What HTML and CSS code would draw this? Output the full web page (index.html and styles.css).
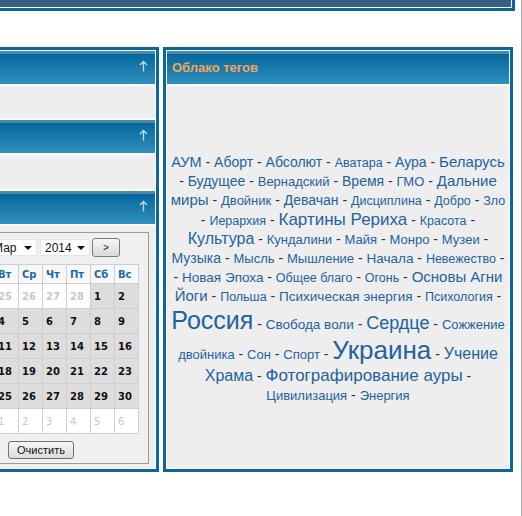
FILE: index.html
```html
<!DOCTYPE html>
<html lang="ru">
<head>
<meta charset="utf-8">
<title>Облако тегов</title>
<link rel="stylesheet" href="styles.css">
</head>
<body>
<div class="page">
  <div class="topbox"><div class="topbar"></div></div>
  <div class="columns">
    <div class="panel left">
      <div class="phead"><svg class="arrow" width="9" height="12" viewBox="0 0 9 12"><path d="M4.5 1.5V11.5M1 5L4.5 1.5L8 5" fill="none" stroke="#c4dcea" stroke-width="1.3"/></svg></div>
      <div class="pbody b1"></div>
      <div class="phead"><svg class="arrow" width="9" height="12" viewBox="0 0 9 12"><path d="M4.5 1.5V11.5M1 5L4.5 1.5L8 5" fill="none" stroke="#c4dcea" stroke-width="1.3"/></svg></div>
      <div class="pbody b2"></div>
      <div class="phead"><svg class="arrow" width="9" height="12" viewBox="0 0 9 12"><path d="M4.5 1.5V11.5M1 5L4.5 1.5L8 5" fill="none" stroke="#c4dcea" stroke-width="1.3"/></svg></div>
      <div class="pbody b3">
        <div class="cal">
          <div class="calnav">
            <span class="btn prev">&lt;</span>
            <span class="sel month">Мар<i class="tri"></i></span>
            <span class="sel year">2014<i class="tri"></i></span>
            <span class="btn next">&gt;</span>
          </div>
          <table class="grid">
            <tr class="hd"><th>Пн</th><th>Вт</th><th>Ср</th><th>Чт</th><th>Пт</th><th>Сб</th><th>Вс</th></tr>
            <tr><td class="o">24</td><td class="o">25</td><td class="o">26</td><td class="o">27</td><td class="o">28</td><td>1</td><td>2</td></tr>
            <tr><td>3</td><td>4</td><td>5</td><td>6</td><td>7</td><td>8</td><td>9</td></tr>
            <tr><td>10</td><td>11</td><td>12</td><td>13</td><td>14</td><td>15</td><td>16</td></tr>
            <tr><td>17</td><td>18</td><td>19</td><td>20</td><td>21</td><td>22</td><td>23</td></tr>
            <tr><td>24</td><td>25</td><td>26</td><td>27</td><td>28</td><td>29</td><td>30</td></tr>
            <tr><td>31</td><td class="o n">1</td><td class="o n">2</td><td class="o n">3</td><td class="o n">4</td><td class="o n">5</td><td class="o n">6</td></tr>
          </table>
          <div class="clearrow"><span class="clear">Очистить</span></div>
        </div>
      </div>
    </div>
    <div class="panel right">
      <div class="phead"><h3 class="ptitle">Облако тегов</h3></div>
      <div class="pbody cloudbody">
        <div class="cloud"><a class="s145">АУМ</a> - <a class="s14">Аборт</a> - <a class="s14">Абсолют</a> - <a class="s125">Аватара</a> - <a class="s14">Аура</a> - <a class="s15">Беларусь</a> - <a class="s14">Будущее</a> - <a class="s13">Вернадский</a> - <a class="s14">Время</a> - <a class="s13">ГМО</a> - <a class="s15">Дальние миры</a> - <a class="s13">Двойник</a> - <a class="s14">Девачан</a> - <a class="s125">Дисциплина</a> - <a class="s125">Добро</a> - <a class="s125">Зло</a> - <a class="s125">Иерархия</a> - <a class="s17">Картины Рериха</a> - <a class="s125">Красота</a> - <a class="s16">Культура</a> - <a class="s13">Кундалини</a> - <a class="s13">Майя</a> - <a class="s13">Монро</a> - <a class="s13">Музеи</a> - <a class="s14">Музыка</a> - <a class="s13">Мысль</a> - <a class="s13">Мышление</a> - <a class="s135">Начала</a> - <a class="s125">Невежество</a> - - <a class="s135">Новая Эпоха</a> - <a class="s125">Общее благо</a> - <a class="s125">Огонь</a> - <a class="s15">Основы Агни Йоги</a> - <a class="s125">Польша</a> - <a class="s135">Психическая энергия</a> - <a class="s125">Психология</a> - <a class="s25">Россия</a> - <a class="s135">Свобода воли</a> - <a class="s18">Сердце</a> - <a class="s13">Сожжение двойника</a> - <a class="s13">Сон</a> - <a class="s13">Спорт</a> - <a class="s26">Украина</a> - <a class="s16">Учение Храма</a> - <a class="s17">Фотографирование ауры</a> - <a class="s13">Цивилизация</a> - <a class="s13">Энергия</a></div>
      </div>
    </div>
  </div>
</div>
</body>
</html>
```

FILE: styles.css
```css
html, body {
  margin: 0;
  padding: 0;
  overflow: hidden;
  background: #ffffff;
}

.page {
  width: 521px;
  height: 516px;
  border-right: 1px solid #a2a9ae;
  overflow: hidden;
  font-family: "Liberation Sans", Arial, sans-serif;
}

.topbox {
  margin: -20px 6px 0 -10px;
  border: 3px solid #0a6898;
  padding: 1px;
  background: #ffffff;
}

.topbar {
  height: 23px;
  background: #385e82;
}

.columns {
  display: flex;
  gap: 4px;
  margin: 36px 0 0 -50px;
  align-items: flex-start;
}

.panel {
  border: 3px solid #0a6898;
  padding: 1px;
  background: #ffffff;
  display: flex;
  flex-direction: column;
  gap: 2px;
}

.panel.left { width: 201px; }
.panel.right { width: 342px; }

.phead {
  height: 33px;
  background: linear-gradient(to bottom, #4a88aa 0, #4a88aa 3px, #05679c 3px, #2f8fbe 100%);
  display: flex;
  align-items: center;
  position: relative;
}

.arrow {
  position: absolute;
  right: 7px;
  top: 9px;
}

.ptitle {
  margin: 0 0 0 5px;
  font-size: 13px;
  font-weight: bold;
  color: #f2a45a;
}

.pbody { background: #eeeeee; }
.b1 { height: 32px; }
.b2 { height: 34px; }
.b3 {
  height: 242px;
  box-sizing: border-box;
  padding: 6px;
}

.cal {
  border: 1px solid #9a9a9a;
  background: #f0f0f0;
  padding: 5px 9px 2px 9px;
  font-family: "Liberation Sans", Arial, sans-serif;
}

.calnav {
  display: flex;
  align-items: center;
  height: 19px;
}

.btn {
  box-sizing: border-box;
  height: 19px;
  border: 1px solid #7a7a7a;
  border-radius: 3px;
  background: linear-gradient(to bottom, #f6f6f6, #dadada);
  font-size: 10px;
  color: #222;
  display: flex;
  align-items: center;
  justify-content: center;
}

.prev { width: 16px; }
.next { width: 28px; margin-left: 2px; }

.sel {
  box-sizing: border-box;
  height: 17px;
  background: #ffffff;
  border: 1px solid #e4e4e4;
  font-size: 12px;
  color: #111;
  display: flex;
  align-items: center;
  justify-content: space-between;
  padding: 0 4px 0 4px;
}

.month { width: 49px; margin-left: 2px; }
.year { width: 50px; margin-left: 3px; }

.tri {
  width: 0;
  height: 0;
  border-left: 4px solid transparent;
  border-right: 4px solid transparent;
  border-top: 4px solid #111;
}

.grid {
  margin-top: 7px;
  border-collapse: collapse;
  table-layout: fixed;
  width: 169px;
  font-family: "DejaVu Sans", Verdana, sans-serif;
  font-size: 10px;
  font-weight: bold;
}

.grid th, .grid td {
  border: 1px solid #cfcfcf;
  padding: 0 0 0 3px;
  text-align: left;
  vertical-align: middle;
}

.grid th {
  height: 18px;
  color: #1b6aa3;
  background: #f8f8f8;
}

.grid td {
  height: 24px;
  background: #dddddd;
  color: #111;
}

.grid td.o {
  background: #ffffff;
  color: #c8c8c8;
}

.grid td.n { font-weight: normal; }

.clearrow {
  margin-top: 6px;
  height: 21px;
}

.clear {
  display: inline-flex;
  box-sizing: border-box;
  margin-left: 38px;
  width: 66px;
  height: 18px;
  border: 1px solid #707070;
  border-radius: 3px;
  background: linear-gradient(to bottom, #f4f4f4, #dcdcdc);
  font-size: 11px;
  color: #111;
  align-items: center;
  justify-content: center;
}

.cloudbody {
  height: 382px;
  box-sizing: border-box;
  padding-top: 3px;
  display: flex;
  align-items: center;
}

.cloud {
  width: 100%;
  box-sizing: border-box;
  padding: 0 3px;
  text-align: center;
  font-size: 14px;
  line-height: 19px;
  color: #333;
}

.cloud a {
  color: #1f639c;
  line-height: normal;
  text-decoration: none;
}

.s125 { font-size: 12.5px; }
.s13 { font-size: 13px; }
.s135 { font-size: 13.5px; }
.s14 { font-size: 14px; }
.s145 { font-size: 14.5px; }
.s15 { font-size: 15px; }
.s16 { font-size: 16px; line-height: 1.3; }
.s17 { font-size: 17px; }
.s18 { font-size: 18px; }
.s25 { font-size: 25px; line-height: 1.25; }
.s26 { font-size: 26px; }
```
